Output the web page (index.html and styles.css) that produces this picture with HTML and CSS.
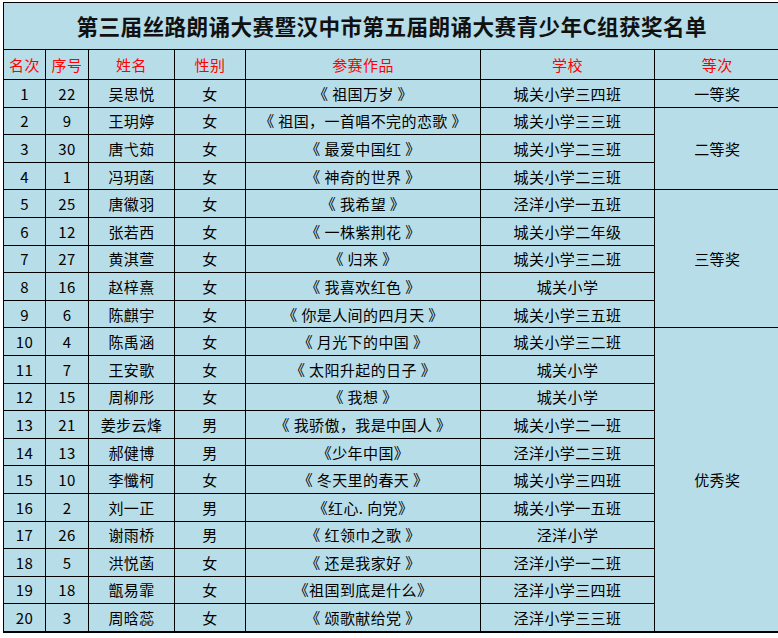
FILE: index.html
```html
<!DOCTYPE html>
<html lang="zh">
<head>
<meta charset="utf-8">
<title>获奖名单</title>
<link rel="stylesheet" href="styles.css">
</head>
<body>
<table class="sheet">
  <colgroup>
    <col class="c1"><col class="c2"><col class="c3"><col class="c4"><col class="c5"><col class="c6"><col class="c7">
  </colgroup>
  <tr class="title-row"><td colspan="7" class="title">第三届丝路朗诵大赛暨汉中市第五届朗诵大赛青少年C组获奖名单</td></tr>
  <tr class="head-row">
    <th>名次</th><th>序号</th><th>姓名</th><th>性别</th><th>参赛作品</th><th>学校</th><th class="last">等次</th>
  </tr>
  <tr><td>1</td><td>22</td><td>吴思悦</td><td>女</td><td>《 祖国万岁 》</td><td>城关小学三四班</td><td class="last">一等奖</td></tr>
  <tr><td>2</td><td>9</td><td>王玥婷</td><td>女</td><td>《 祖国，一首唱不完的恋歌 》</td><td>城关小学三三班</td><td class="last" rowspan="3">二等奖</td></tr>
  <tr><td>3</td><td>30</td><td>唐弋茹</td><td>女</td><td>《 最爱中国红 》</td><td>城关小学二三班</td></tr>
  <tr><td>4</td><td>1</td><td>冯玥菡</td><td>女</td><td>《 神奇的世界 》</td><td>城关小学二三班</td></tr>
  <tr><td>5</td><td>25</td><td>唐徽羽</td><td>女</td><td>《 我希望 》</td><td>泾洋小学一五班</td><td class="last" rowspan="5">三等奖</td></tr>
  <tr><td>6</td><td>12</td><td>张若西</td><td>女</td><td>《 一株紫荆花 》</td><td>城关小学二年级</td></tr>
  <tr><td>7</td><td>27</td><td>黄淇萱</td><td>女</td><td>《 归来 》</td><td>城关小学三二班</td></tr>
  <tr><td>8</td><td>16</td><td>赵梓熹</td><td>女</td><td>《 我喜欢红色 》</td><td>城关小学</td></tr>
  <tr><td>9</td><td>6</td><td>陈麒宇</td><td>女</td><td>《 你是人间的四月天 》</td><td>城关小学三五班</td></tr>
  <tr><td>10</td><td>4</td><td>陈禹涵</td><td>女</td><td>《 月光下的中国 》</td><td>城关小学三二班</td><td class="last" rowspan="11">优秀奖</td></tr>
  <tr><td>11</td><td>7</td><td>王安歌</td><td>女</td><td>《 太阳升起的日子 》</td><td>城关小学</td></tr>
  <tr><td>12</td><td>15</td><td>周柳彤</td><td>女</td><td>《 我想 》</td><td>城关小学</td></tr>
  <tr><td>13</td><td>21</td><td>姜步云烽</td><td>男</td><td>《 我骄傲，我是中国人 》</td><td>城关小学二一班</td></tr>
  <tr><td>14</td><td>13</td><td>郝健博</td><td>男</td><td>《少年中国》</td><td>泾洋小学二三班</td></tr>
  <tr><td>15</td><td>10</td><td>李懺柯</td><td>女</td><td>《 冬天里的春天 》</td><td>城关小学三四班</td></tr>
  <tr><td>16</td><td>2</td><td>刘一正</td><td>男</td><td>《红心. 向党》</td><td>城关小学一五班</td></tr>
  <tr><td>17</td><td>26</td><td>谢雨桥</td><td>男</td><td>《 红领巾之歌 》</td><td>泾洋小学</td></tr>
  <tr><td>18</td><td>5</td><td>洪悦菡</td><td>女</td><td>《 还是我家好 》</td><td>泾洋小学一二班</td></tr>
  <tr><td>19</td><td>18</td><td>甑易霏</td><td>女</td><td>《祖国到底是什么》</td><td>泾洋小学三四班</td></tr>
  <tr class="end-row"><td>20</td><td>3</td><td>周晗蕊</td><td>女</td><td>《 颂歌献给党 》</td><td>泾洋小学三三班</td></tr>
</table>
</body>
</html>
```
FILE: styles.css
```css
html, body {
  margin: 0;
  padding: 0;
  background: #ffffff;
  overflow: hidden;
}

.sheet {
  margin: 2px 0 0 3px;
  border-collapse: collapse;
  table-layout: fixed;
  width: 776px;
  background: #b7dde8;
  font-family: "Noto Sans CJK SC", "Noto Sans", sans-serif;
  font-size: 15px;
  color: #000;
  border-left: 1px solid #000;
  border-top: 1px solid #000;
  border-bottom: 2px solid #000;
}

.c1 { width: 42px; }
.c2 { width: 43px; }
.c3 { width: 86px; }
.c4 { width: 71px; }
.c5 { width: 235px; }
.c6 { width: 174px; }
.c7 { width: 125px; }

.sheet td, .sheet th {
  border: 1px solid #000;
  padding: 0;
  text-align: center;
  vertical-align: middle;
  white-space: nowrap;
  line-height: 1;
  letter-spacing: 0.4px;
}

.sheet .last {
  border-right: none;
}

.title-row td {
  height: 46px;
  border-right: none;
}

.title {
  font-size: 21.6px;
  font-weight: bold;
  letter-spacing: 0;
  padding-top: 2px;
  color: #111;
}

.head-row th {
  height: 29px;
  font-weight: normal;
  color: #ff0000;
}

.sheet tr td {
  height: 26.6px;
}

.sheet .title-row td {
  height: 46px;
}

.end-row td {
  border-bottom: 2px solid #000;
}
```
